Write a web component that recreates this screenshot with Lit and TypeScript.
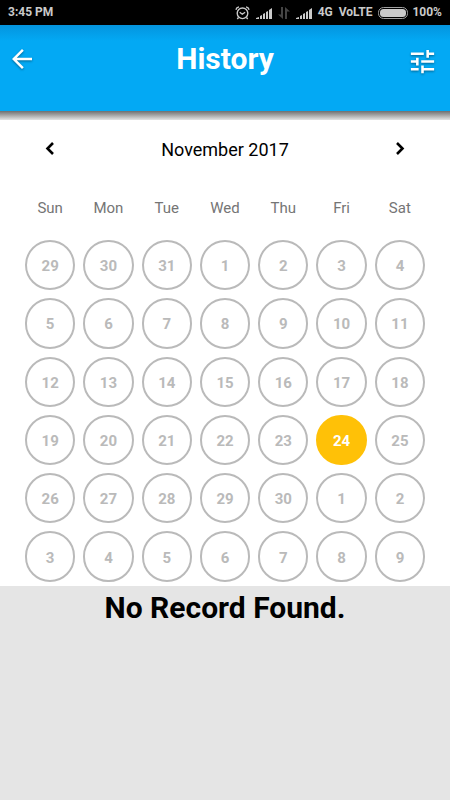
import { LitElement, html, css, svg } from "lit";
import { customElement, state } from "lit/decorators.js";
import { classMap } from "lit/directives/class-map.js";

const WEEKDAYS = ["Sun", "Mon", "Tue", "Wed", "Thu", "Fri", "Sat"];
const MONTHS = [
  "January", "February", "March", "April", "May", "June", "July",
  "August", "September", "October", "November", "December",
];

@customElement("status-bar")
class StatusBar extends LitElement {
  static styles = css`
    :host {
      display: flex;
      align-items: center;
      justify-content: space-between;
      height: 25px;
      padding: 0 8px;
      background: #000;
      color: #cacaca;
      font: 700 12px/25px Roboto, sans-serif;
    }
    .icons {
      display: flex;
      align-items: center;
      gap: 6px;
    }
    .power {
      display: flex;
      align-items: center;
      gap: 4px;
    }
    svg {
      display: block;
    }
  `;

  private signal() {
    return html`<svg width="16" height="12" viewBox="0 0 16 12" fill="#cacaca">
      <path d="M0 12v-1l3-1v2zM4 12V9l2-1v4zM7 12V7l2-1v6zM10 12V5l2-1v8zM13 12V3l3-2v11z" />
    </svg>`;
  }

  render() {
    return html`
      <span>3:45 PM</span>
      <div class="icons">
        <svg width="15" height="14" viewBox="0 0 15 14" fill="none" stroke="#cacaca" stroke-width="1.400">
          <circle cx="7.500" cy="7.300" r="5.300" />
          <path d="M4.700 6.200l2.600 2 2.800-2M.900 3.700Q1.500 1.400 4 .900M14.100 3.700Q13.500 1.400 11 .900M3.500 11.500L2.300 13M11.500 11.500l1.200 1.500" />
        </svg>
        ${this.signal()}
        <svg width="12" height="12" viewBox="0 0 12 12" fill="#444">
          <path d="M3 0h2v12L0 7.500h3zM7 0l5 4.500H9V12H7z" />
        </svg>
        ${this.signal()}
        <span>4G</span>
        <span>VoLTE</span>
        <span class="power">
          <svg width="30" height="12" viewBox="0 0 30 12">
            <rect x=".500" y=".500" width="29" height="11" rx="5" fill="none" stroke="#a0a0a0" />
            <rect x="2" y="2" width="26" height="8" rx="3.500" fill="#cacaca" />
          </svg>
          100%
        </span>
      </div>
    `;
  }
}

@customElement("top-bar")
class TopBar extends LitElement {
  static styles = css`
    :host {
      position: relative;
      display: grid;
      grid-template-columns: 44px 1fr 44px;
      align-items: start;
      height: 86px;
      padding: 0 6px 0 0;
      background: linear-gradient(#0494de, #03a9f4 16px);
      color: #fff;
    }
    :host::after {
      content: "";
      position: absolute;
      top: 100%;
      left: 0;
      right: 0;
      height: 9px;
      background: linear-gradient(#6f6f6f, #e4e4e4);
    }
    h1 {
      margin: 0;
      padding: 14px 0 0 6px;
      font: 700 30px/40px Roboto, sans-serif;
      text-align: center;
    }
    button {
      display: grid;
      place-items: center;
      width: 44px;
      height: 68px;
      padding: 0;
      border: 0;
      background: none;
      color: inherit;
    }
    .filter {
      height: 72px;
    }
    svg {
      filter: drop-shadow(0 1px 1px rgba(0, 0, 0, 0.4));
    }
  `;

  render() {
    return html`
      <button aria-label="Back">
        <svg width="30" height="30" viewBox="0 0 24 24" fill="currentColor">
          <path d="M20 11H7.830l5.590-5.590L12 4l-8 8 8 8 1.410-1.410L7.830 13H20v-2z" />
        </svg>
      </button>
      <h1>History</h1>
      <button class="filter" aria-label="Filter">
        <svg width="31" height="31" viewBox="0 0 24 24" fill="currentColor">
          <path d="M3 17v2h6v-2H3zM3 5v2h10V5H3zm10 16v-2h8v-2h-8v-2h-2v6h2zM7 9v2H3v2h4v2h2V9H7zm14 4v-2H11v2h10zm-6-4h2V7h4V5h-4V3h-2v6z" />
        </svg>
      </button>
    `;
  }
}

@customElement("month-calendar")
class MonthCalendar extends LitElement {
  static styles = css`
    :host {
      display: block;
      padding: 9px 21px 0;
      background: #fff;
      font-family: Roboto, sans-serif;
    }
    .nav {
      display: grid;
      grid-template-columns: 1fr 5fr 1fr;
      align-items: center;
      height: 58px;
    }
    h2 {
      margin: 0;
      padding-top: 2px;
      font: 400 18px/24px Roboto, sans-serif;
      text-align: center;
      color: #000;
    }
    button {
      padding: 0;
      background: none;
      font-family: inherit;
    }
    .step {
      display: grid;
      place-items: center;
      height: 56px;
      border: 0;
      color: #000;
    }
    table,
    thead,
    tbody {
      display: block;
    }
    tr {
      display: grid;
      grid-template-columns: repeat(7, 1fr);
    }
    th {
      padding: 20px 0 18px;
      font: 400 15px/20px Roboto, sans-serif;
      text-align: center;
      color: #757575;
    }
    td {
      box-sizing: border-box;
      aspect-ratio: 1;
      padding: 4px;
    }
    .day {
      box-sizing: border-box;
      display: block;
      width: 100%;
      height: 100%;
      padding-top: 2px;
      border: 2px solid #bababa;
      border-radius: 50%;
      font-size: 15px;
      font-weight: 700;
      line-height: 20px;
      color: #bababa;
    }
    .selected {
      border-color: #ffc107;
      background: #ffc107;
      color: #fff;
    }
  `;

  @state() private year = 2017;
  @state() private month = 10;
  @state() private selected = new Date(2017, 10, 24).getTime();

  private move(step: number) {
    const next = new Date(this.year, this.month + step, 1);
    this.year = next.getFullYear();
    this.month = next.getMonth();
  }

  private weeks(): Date[][] {
    const lead = new Date(this.year, this.month, 1).getDay();
    return [0, 1, 2, 3, 4, 5].map((week) =>
      WEEKDAYS.map((_, day) => new Date(this.year, this.month, 1 - lead + week * 7 + day))
    );
  }

  render() {
    return html`
      <div class="nav">
        <button class="step" aria-label="Previous month" @click=${() => this.move(-1)}>
          <svg width="20" height="20" viewBox="0 0 20 20" fill="none" stroke="currentColor" stroke-width="2.600">
            <path d="M13 4L7.500 9.500 13 15" />
          </svg>
        </button>
        <h2>${MONTHS[this.month]} ${this.year}</h2>
        <button class="step" aria-label="Next month" @click=${() => this.move(1)}>
          <svg width="20" height="20" viewBox="0 0 20 20" fill="none" stroke="currentColor" stroke-width="2.600">
            <path d="M7 4l5.500 5.500L7 15" />
          </svg>
        </button>
      </div>
      <table>
        <thead>
          <tr>${WEEKDAYS.map((name) => html`<th scope="col">${name}</th>`)}</tr>
        </thead>
        <tbody>
          ${this.weeks().map(
            (week) => html`<tr>
              ${week.map(
                (date) => html`<td>
                  <button
                    class=${classMap({ day: true, selected: date.getTime() === this.selected })}
                    @click=${() => (this.selected = date.getTime())}
                  >${date.getDate()}</button>
                </td>`
              )}
            </tr>`
          )}
        </tbody>
      </table>
    `;
  }
}

@customElement("app-root")
class AppRoot extends LitElement {
  static styles = css`
    :host {
      display: flex;
      flex-direction: column;
      min-height: 100vh;
      background: #e5e5e5;
    }
    .empty {
      margin: 0;
      font: 700 30px/44px Roboto, sans-serif;
      text-align: center;
      color: #000;
    }
  `;

  render() {
    return html`
      <status-bar></status-bar>
      <top-bar></top-bar>
      <month-calendar></month-calendar>
      <p class="empty">No Record Found.</p>
    `;
  }
}
